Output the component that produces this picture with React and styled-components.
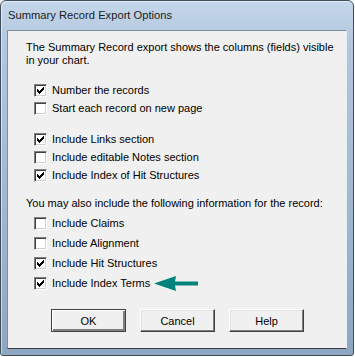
import React, { useState } from 'react';
import styled, { createGlobalStyle } from 'styled-components';

const GlobalStyle = createGlobalStyle`
  html, body {
    margin: 0;
    padding: 0;
    background: #ffffff;
  }
`;

const options1 = [
  { key: 'number', label: 'Number the records', checked: true },
  { key: 'newPage', label: 'Start each record on new page', checked: false }
];

const options2 = [
  { key: 'links', label: 'Include Links section', checked: true },
  { key: 'notes', label: 'Include editable Notes section', checked: false },
  { key: 'hitIndex', label: 'Include Index of Hit Structures', checked: true }
];

const options3 = [
  { key: 'claims', label: 'Include Claims', checked: false },
  { key: 'alignment', label: 'Include Alignment', checked: false },
  { key: 'hits', label: 'Include Hit Structures', checked: true },
  { key: 'terms', label: 'Include Index Terms', checked: true, marked: true }
];

const CheckMark = () => (
  <svg width="7" height="7" viewBox="0 0 7 7" shapeRendering="crispEdges">
    <path d="M0 2h1v3h-1zM1 3h1v3h-1zM2 4h1v3h-1zM3 3h1v3h-1zM4 2h1v3h-1zM5 1h1v3h-1zM6 0h1v3h-1z" fill="#000" />
  </svg>
);

const Arrow = () => (
  <ArrowIcon width="44" height="15" viewBox="0 0 44 15">
    <path d="M0 7.5 L22 0 L21 5.5 L44 5.5 L44 9.5 L21 9.5 L22 15 Z" fill="#00827d" />
  </ArrowIcon>
);

const CheckRow = ({ option, height, onToggle }) => (
  <Row $height={height} onClick={() => onToggle(option.key)}>
    <Box>{option.checked && <CheckMark />}</Box>
    <Label>{option.label}</Label>
    {option.marked && <Arrow />}
  </Row>
);

const App = () => {
  const all = [...options1, ...options2, ...options3];
  const [checked, setChecked] = useState(
    Object.fromEntries(all.map((o) => [o.key, o.checked]))
  );

  const toggle = (key) => setChecked({ ...checked, [key]: !checked[key] });
  const withState = (list) => list.map((o) => ({ ...o, checked: checked[o.key] }));

  return (
    <>
      <GlobalStyle />
      <Window>
        <TitleBar>Summary Record Export Options</TitleBar>
        <Client>
          <Intro>
            The Summary Record export shows the columns (fields) visible
            <br />
            in your chart.
          </Intro>
          <Group $top={14}>
            {withState(options1).map((o) => (
              <CheckRow key={o.key} option={o} height={18} onToggle={toggle} />
            ))}
          </Group>
          <Group $top={13}>
            {withState(options2).map((o) => (
              <CheckRow key={o.key} option={o} height={18} onToggle={toggle} />
            ))}
          </Group>
          <Note>You may also include the following information for the record:</Note>
          <Group $top={3}>
            {withState(options3).map((o) => (
              <CheckRow key={o.key} option={o} height={20} onToggle={toggle} />
            ))}
          </Group>
          <ButtonBar>
            <Button $primary>OK</Button>
            <Button>Cancel</Button>
            <Button>Help</Button>
          </ButtonBar>
        </Client>
      </Window>
    </>
  );
};

const Window = styled.div`
  width: 354px;
  height: 356px;
  box-sizing: border-box;
  display: flex;
  flex-direction: column;
  padding: 0 6px 6px 6px;
  border: 1px solid #3e4c5c;
  border-radius: 6px 6px 3px 3px;
  background: linear-gradient(180deg, #c4d6ea 0%, #b2c7de 12%, #9fb6cf 60%, #8ea6c0 100%);
  box-shadow: inset 1px 1px 0 rgba(255, 255, 255, 0.55);
`;

const TitleBar = styled.div`
  height: 29px;
  flex: none;
  display: flex;
  align-items: center;
  padding-left: 1px;
  padding-bottom: 1px;
  box-sizing: border-box;
  font-family: 'Liberation Sans', Arial, sans-serif;
  font-size: 11.2px;
  color: #1b1b1b;
`;

const Client = styled.div`
  flex: 1;
  display: flex;
  flex-direction: column;
  background: #f0f0f0;
  border: 1px solid;
  border-color: #7d8ea1 #e6edf5 #38404a #7d8ea1;
  padding: 10px 0 0 18px;
  font-family: 'Liberation Sans', Arial, sans-serif;
  font-size: 11px;
  color: #000;
`;

const Intro = styled.div`
  line-height: 13px;
`;

const Note = styled.div`
  line-height: 13px;
  margin-top: 13px;
`;

const Group = styled.div`
  display: flex;
  flex-direction: column;
  margin-top: ${(p) => p.$top}px;
  padding-left: 8px;
`;

const Row = styled.div`
  height: ${(p) => p.$height}px;
  display: flex;
  align-items: center;
  cursor: default;
`;

const Box = styled.span`
  width: 13px;
  height: 13px;
  box-sizing: border-box;
  display: flex;
  align-items: center;
  justify-content: center;
  background: #fff;
  border: 1px solid;
  border-color: #808080 #ffffff #ffffff #808080;
  box-shadow: inset 1px 1px 0 #404040, inset -1px -1px 0 #d4d0c8;
  flex: none;
`;

const Label = styled.span`
  margin-left: 5px;
  white-space: nowrap;
`;

const ArrowIcon = styled.svg`
  margin-left: 4px;
  flex: none;
`;

const ButtonBar = styled.div`
  display: flex;
  gap: 14px;
  margin-top: 16px;
  padding-left: 25px;
`;

const Button = styled.button`
  width: 75px;
  height: 23px;
  box-sizing: border-box;
  padding: 0;
  background: #f0f0f0;
  font-family: 'Liberation Sans', Arial, sans-serif;
  font-size: 11px;
  color: #000;
  border: 1px solid;
  border-color: ${(p) => (p.$primary ? '#404040' : '#ffffff #404040 #404040 #ffffff')};
  box-shadow: ${(p) =>
    p.$primary
      ? 'inset 1px 1px 0 #ffffff, inset -2px -2px 0 #808080'
      : 'inset -1px -1px 0 #808080, inset 1px 1px 0 #e3e3e3'};
  border-radius: 0;
`;

export default App;
